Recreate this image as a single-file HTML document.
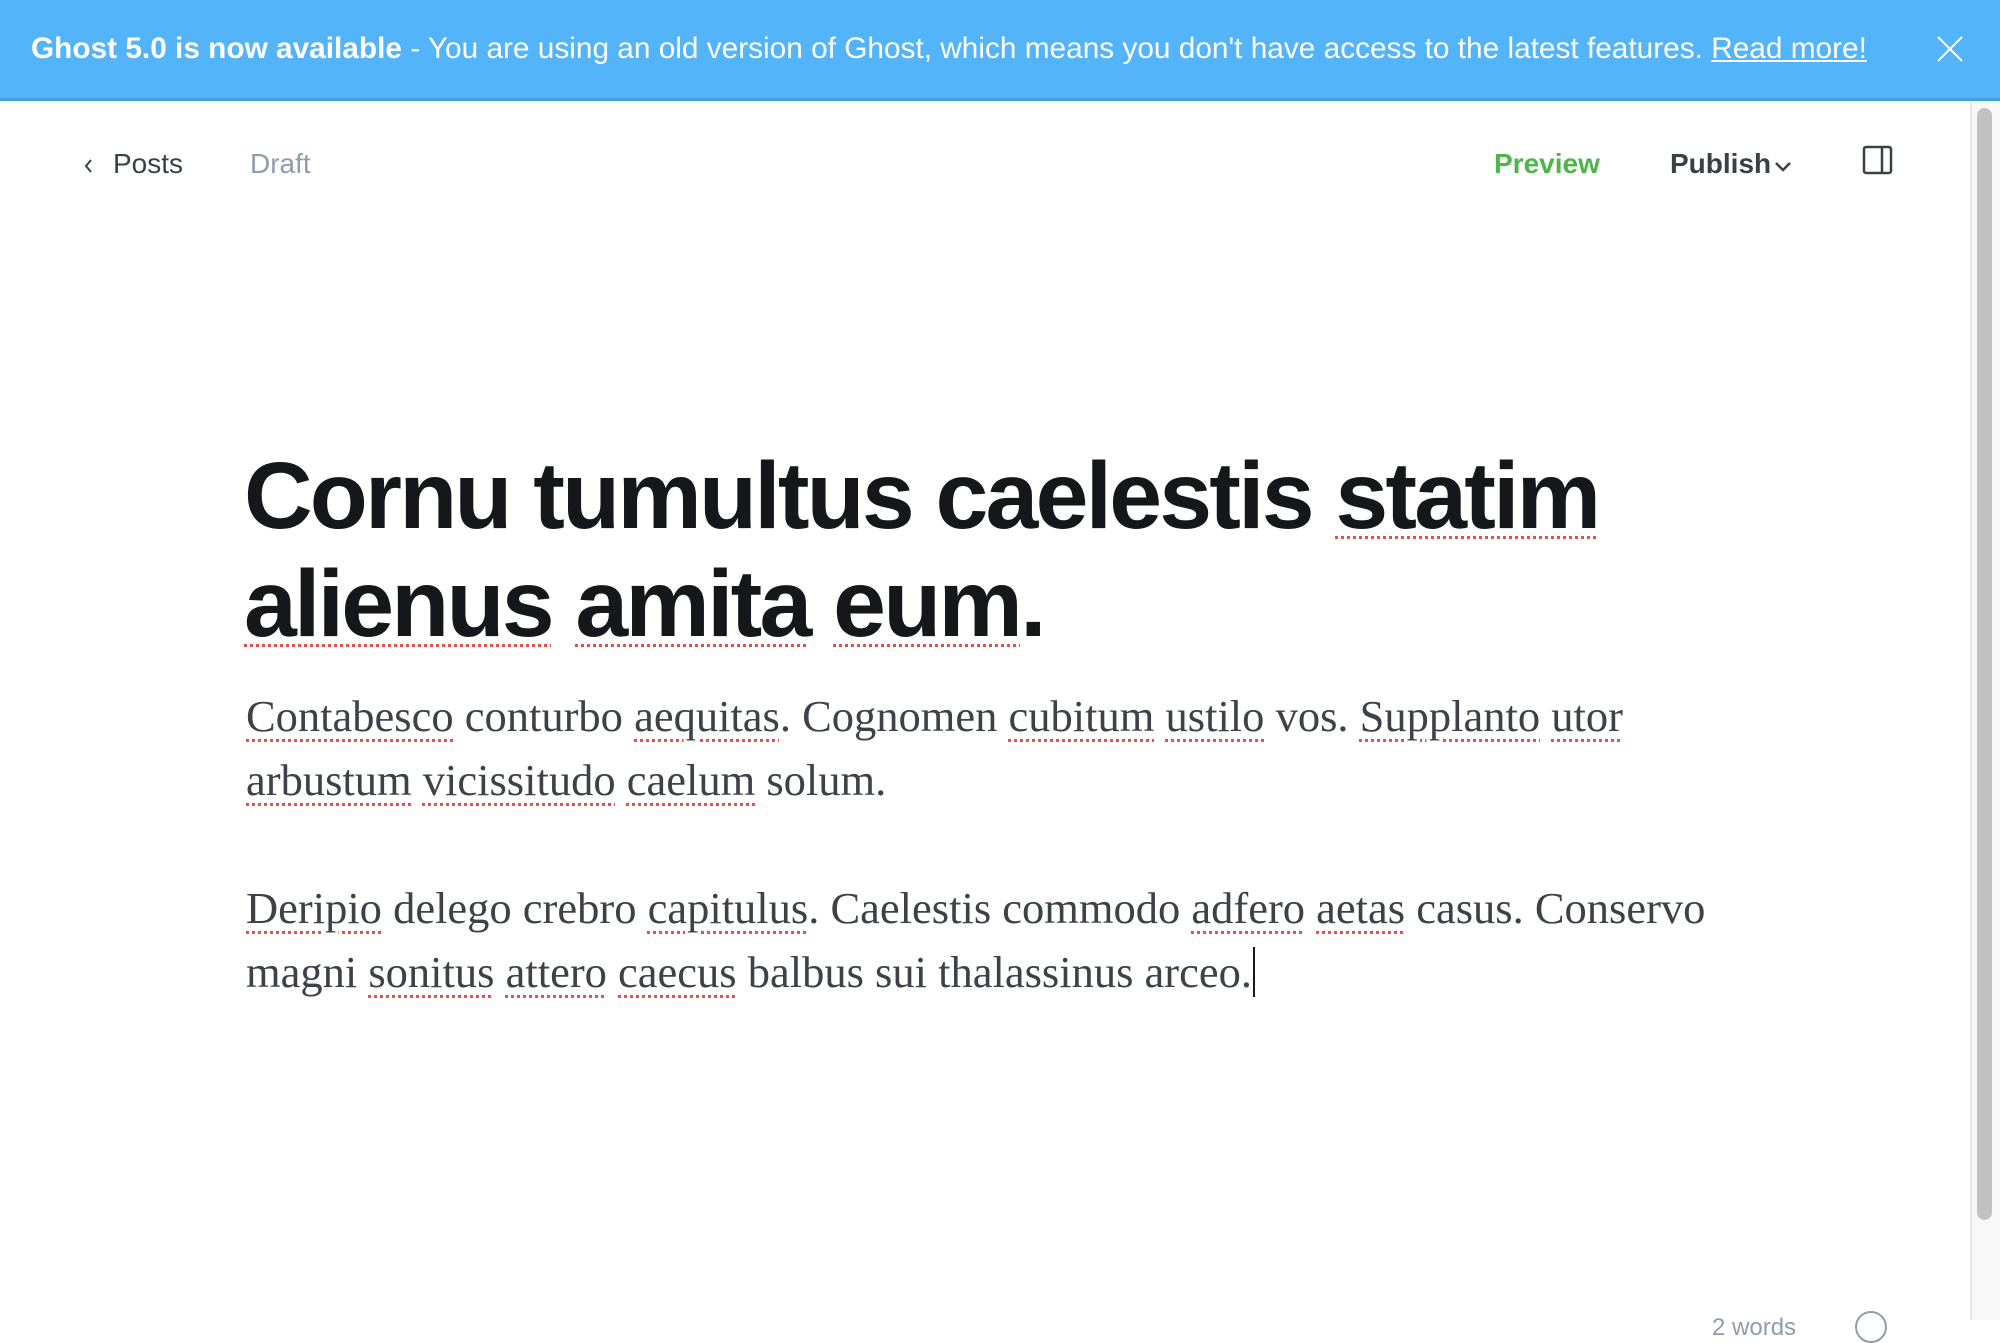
<!DOCTYPE html>
<html><head><style>
html,body{margin:0;padding:0;width:2000px;height:1320px;overflow:hidden;background:#fff;font-family:"Liberation Sans",sans-serif;}
.banner{position:absolute;left:0;top:0;width:2000px;height:98px;background:#54b4f9;border-bottom:3px solid #45a0e0;color:#fff;font-size:29.8px;}
.banner .t{position:absolute;left:31px;top:32px;white-space:nowrap;}
.banner b{font-weight:bold;}
.banner u{text-decoration:underline;}
.close{position:absolute;left:1937px;top:36px;}
.sb{position:absolute;left:1970px;top:101px;width:30px;height:1219px;background:#f8f8f8;border-left:2px solid #e8e8e8;}
.thumb{position:absolute;left:1977px;top:108px;width:15px;height:1112px;background:#c1c1c1;border-radius:8px;}
.nav{position:absolute;top:148px;font-size:28px;color:#394047;white-space:nowrap;}
h1{position:absolute;left:244px;top:442px;margin:0;font-size:95px;line-height:108px;font-weight:bold;color:#15171a;letter-spacing:-2.8px;width:1600px;}
p{position:absolute;left:246px;margin:0;font-family:"Liberation Serif",serif;font-size:44.5px;line-height:64px;color:#3d4148;width:1600px;white-space:nowrap;}
.sq{text-decoration:underline dotted #e25050;text-underline-offset:8px;text-decoration-thickness:3px;}
</style></head><body>
<div class="banner"><div class="t"><b>Ghost 5.0 is now available</b> - You are using an old version of Ghost, which means you don't have access to the latest features. <u>Read more!</u></div>
<svg class="close" width="26" height="26" viewBox="0 0 26 26"><path d="M1 1L25 25M25 1L1 25" stroke="#fff" stroke-width="2"/></svg></div>
<div class="sb"></div><div class="thumb"></div>
<svg style="position:absolute;left:83px;top:157px" width="12" height="18" viewBox="0 0 12 18"><path d="M8 3L3 9L8 15" stroke="#394047" stroke-width="2" fill="none"/></svg>
<div class="nav" style="left:113px">Posts</div>
<div class="nav" style="left:250px;color:#8e9cac">Draft</div>
<div class="nav" style="left:1494px;color:#4cb64a;font-weight:bold">Preview</div>
<div class="nav" style="left:1670px;font-weight:bold">Publish</div>
<svg style="position:absolute;left:1774px;top:161px" width="18" height="12" viewBox="0 0 18 12"><path d="M2 2L9 9L16 2" stroke="#394047" stroke-width="2.5" fill="none"/></svg>
<svg style="position:absolute;left:1862px;top:145px" width="32" height="30" viewBox="0 0 32 30"><rect x="2" y="2" width="27" height="26" rx="2" stroke="#394047" stroke-width="2.5" fill="none"/><path d="M20 2V28" stroke="#394047" stroke-width="2.5"/></svg>
<h1>Cornu tumultus caelestis <span class="sq">statim</span><br><span class="sq">alienus</span> <span class="sq">amita</span> <span class="sq">eum</span>.</h1>
<p style="top:684px"><span class="sq">Contabesco</span> conturbo <span class="sq">aequitas</span>. Cognomen <span class="sq">cubitum</span> <span class="sq">ustilo</span> vos. <span class="sq">Supplanto</span> <span class="sq">utor</span><br><span class="sq">arbustum</span> <span class="sq">vicissitudo</span> <span class="sq">caelum</span> solum.</p>
<p style="top:876px"><span class="sq">Deripio</span> delego crebro <span class="sq">capitulus</span>. Caelestis commodo <span class="sq">adfero</span> <span class="sq">aetas</span> casus. Conservo<br>magni <span class="sq">sonitus</span> <span class="sq">attero</span> <span class="sq">caecus</span> balbus sui thalassinus arceo.<span style="border-left:2px solid #15171a;margin-left:1px"></span></p>
<div style="position:absolute;left:1712px;top:1314px;font-size:24px;color:#8e9cac">2 words</div>
<div style="position:absolute;left:1855px;top:1311px;width:28px;height:28px;border:2px solid #8e9cac;border-radius:50%"></div>
</body></html>
